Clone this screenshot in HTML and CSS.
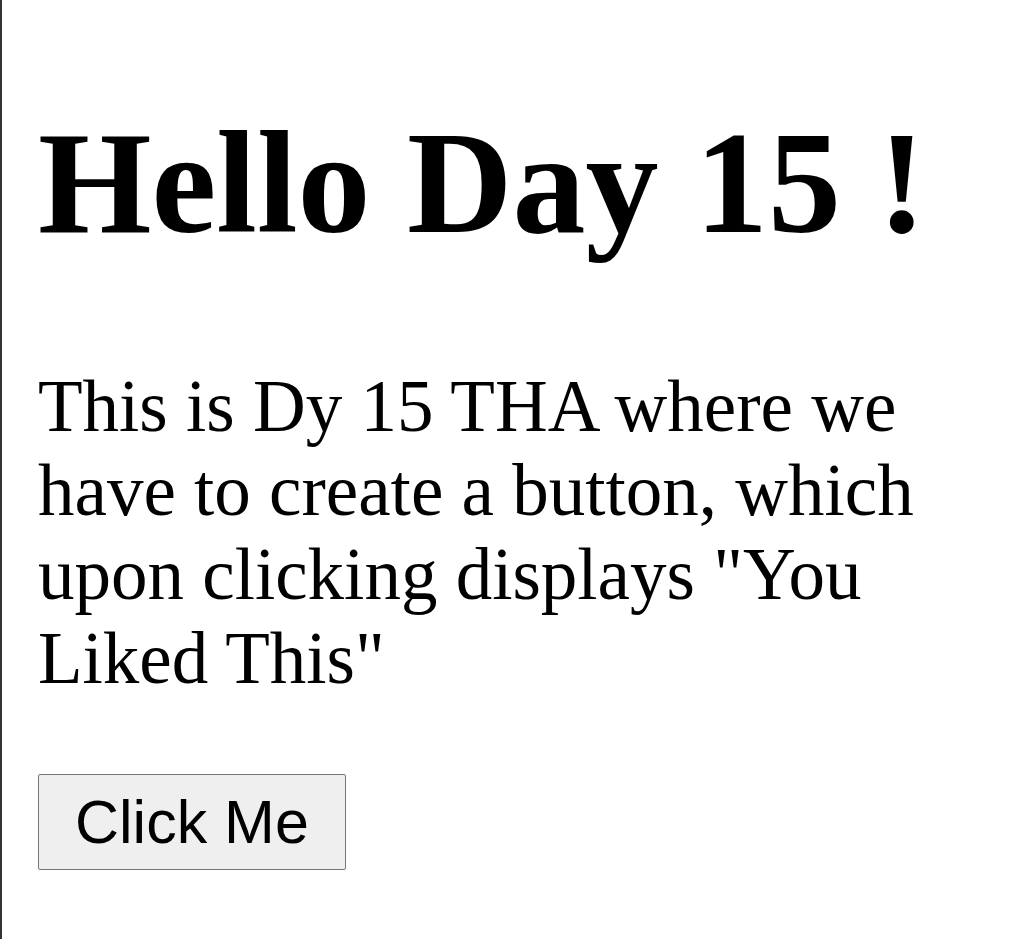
FILE: index.html
```html
<!DOCTYPE html>
<html lang="en">
<head>
<meta charset="utf-8">
<title>Day 15</title>
<link rel="stylesheet" href="styles.css">
</head>
<body>
<main class="page">
  <h1 class="title">Hello Day 15 !</h1>
  <p class="intro">This is Dy 15 THA where we have to create a button, which upon clicking displays "You Liked This"</p>
  <button class="like-btn" type="button">Click Me</button>
</main>
</body>
</html>
```

FILE: styles.css
```css
html, body {
  margin: 0;
  padding: 0;
  background: #ffffff;
}

body {
  min-height: 100vh;
  box-sizing: border-box;
  border-left: 2px solid #333333;
  display: flow-root;
  font-family: "Liberation Serif", "Times New Roman", serif;
  color: #000000;
}

.page {
  display: flow-root;
  padding: 0 36px;
}

.title {
  font-size: 146px;
  font-weight: bold;
  line-height: normal;
  margin: 99px 0 98px;
}

.intro {
  font-size: 73px;
  line-height: normal;
  margin: 0 0 73px;
  max-width: 900px;
}

.like-btn {
  font-family: "Liberation Sans", Arial, sans-serif;
  font-size: 61px;
  line-height: normal;
  color: #000000;
  background: #efefef;
  border: 1px solid #767676;
  border-radius: 2px;
  padding: 12px 36px;
  margin: 0;
}
```
